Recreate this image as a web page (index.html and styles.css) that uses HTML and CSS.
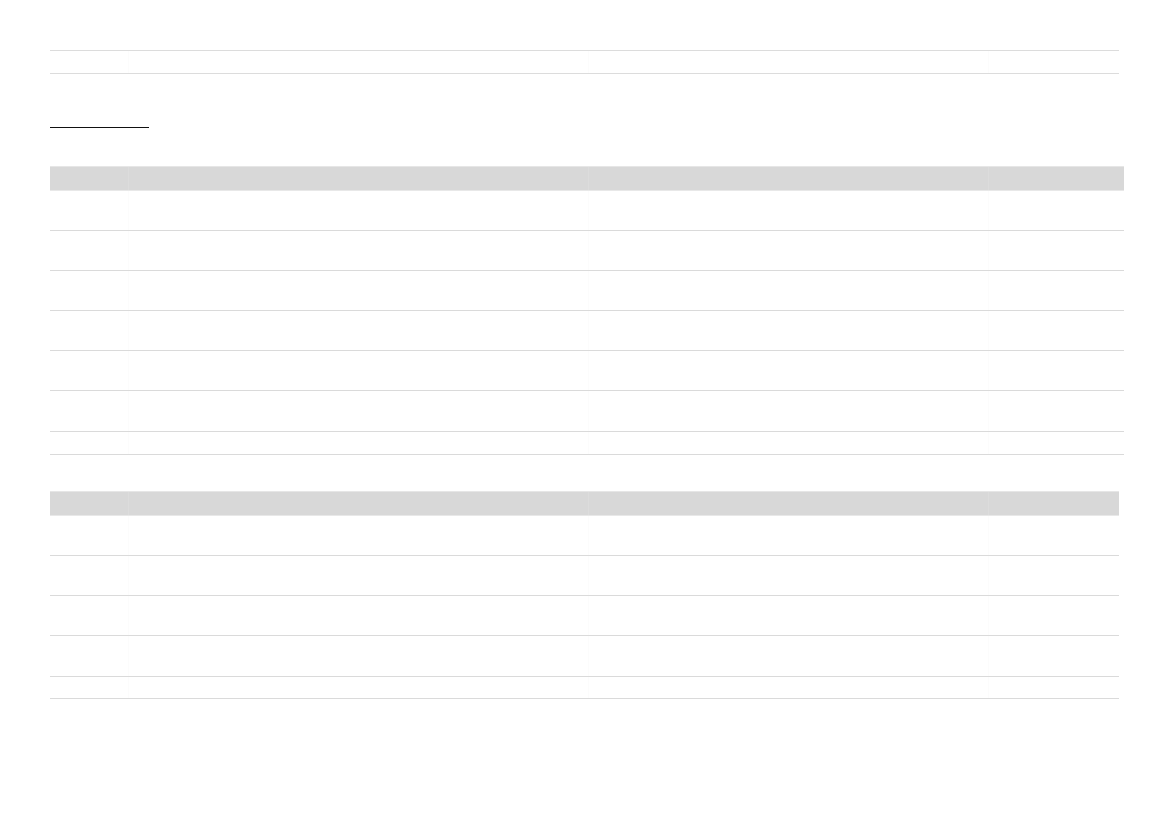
FILE: index.html
```html
<!DOCTYPE html>
<html lang="en">
<head>
<meta charset="utf-8">
<title>Report</title>
<link rel="stylesheet" href="styles.css">
</head>
<body>
<div class="page">
  <div class="summary">
    <div class="cell c1"></div><div class="cell"></div><div class="cell"></div><div class="cell"></div>
  </div>
  <div class="title"></div>

  <div class="table wide">
    <div class="row head"><div class="cell c1"></div><div class="cell"></div><div class="cell"></div><div class="cell"></div></div>
    <div class="row"><div class="cell c1"></div><div class="cell"></div><div class="cell"></div><div class="cell"></div></div>
    <div class="row"><div class="cell c1"></div><div class="cell"></div><div class="cell"></div><div class="cell"></div></div>
    <div class="row"><div class="cell c1"></div><div class="cell"></div><div class="cell"></div><div class="cell"></div></div>
    <div class="row"><div class="cell c1"></div><div class="cell"></div><div class="cell"></div><div class="cell"></div></div>
    <div class="row"><div class="cell c1"></div><div class="cell"></div><div class="cell"></div><div class="cell"></div></div>
    <div class="row tall"><div class="cell c1"></div><div class="cell"></div><div class="cell"></div><div class="cell"></div></div>
    <div class="row short"><div class="cell c1"></div><div class="cell"></div><div class="cell"></div><div class="cell"></div></div>
  </div>

  <div class="table narrow second">
    <div class="row head"><div class="cell c1"></div><div class="cell"></div><div class="cell"></div><div class="cell"></div></div>
    <div class="row"><div class="cell c1"></div><div class="cell"></div><div class="cell"></div><div class="cell"></div></div>
    <div class="row"><div class="cell c1"></div><div class="cell"></div><div class="cell"></div><div class="cell"></div></div>
    <div class="row"><div class="cell c1"></div><div class="cell"></div><div class="cell"></div><div class="cell"></div></div>
    <div class="row tall"><div class="cell c1"></div><div class="cell"></div><div class="cell"></div><div class="cell"></div></div>
    <div class="row last"><div class="cell c1"></div><div class="cell"></div><div class="cell"></div><div class="cell"></div></div>
  </div>
</div>
</body>
</html>
```
FILE: styles.css
```css
* { box-sizing: border-box; }
html, body { margin: 0; padding: 0; background: #ffffff; }
body { font-family: "Liberation Sans", Arial, sans-serif; font-size: 12px; color: #222; }

.page {
  padding: 50px 0 0 50px;
  width: 1169px;
}

.summary {
  width: 1069px;
  height: 24px;
  border-top: 1px solid #dcdcdc;
  border-bottom: 1px solid #dcdcdc;
  display: grid;
  grid-template-columns: 78px 460px 400px 1fr;
}

.cell { border-left: 1px solid #fcfcfc; }
.cell.c1 { border-left: none; }

.title {
  width: 99px;
  height: 54px;
  border-bottom: 1px solid #111111;
}

.table { margin-top: 38px; }
.table.wide { width: 1074px; }
.table.narrow { width: 1069px; }
.table.second { margin-top: 36px; }

.row {
  display: grid;
  grid-template-columns: 78px 460px 400px 1fr;
  height: 40px;
  border-bottom: 1px solid #dadada;
}
.row.tall { height: 41px; }
.row.short { height: 23px; }
.row.last { height: 22px; }

.row.head {
  height: 25px;
  background: #d8d8d8;
  border-top: 1px solid #e6e6e6;
  border-bottom: 1px solid #e8e8e8;
}
.row.head .cell { border-left: 1px solid #dcdcdc; }
.row.head .cell.c1 { border-left: none; }
```
